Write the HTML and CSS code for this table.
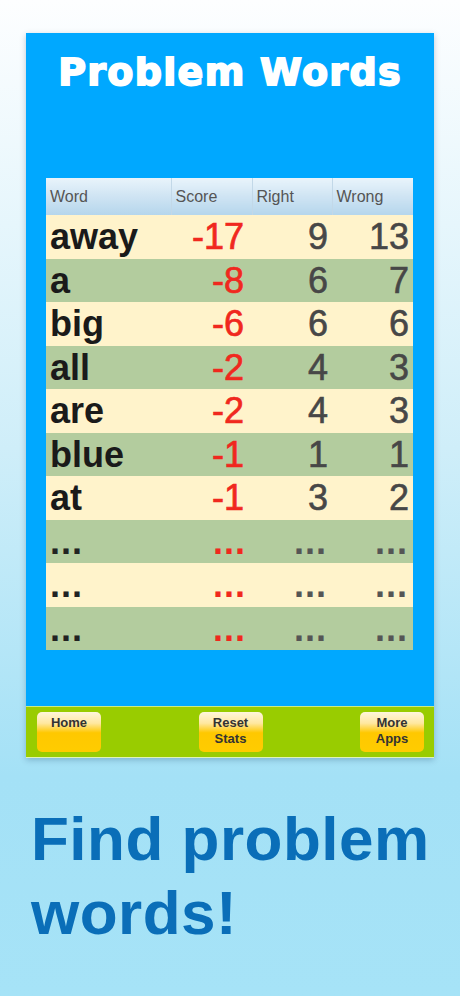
FILE: index.html
```html
<!DOCTYPE html>
<html lang="en">
<head>
<meta charset="UTF-8">
<meta name="viewport" content="width=device-width, initial-scale=1.0">
<title>Problem Words</title>
<link rel="stylesheet" href="styles.css">
</head>
<body>

<div id="phone">
  <div id="screen">
    <h1 class="title">Problem Words</h1>
    <table id="wordTable">
      <thead>
        <tr>
          <th class="col-word">Word</th>
          <th class="col-score">Score</th>
          <th class="col-right">Right</th>
          <th class="col-wrong">Wrong</th>
        </tr>
      </thead>
      <tbody>
        <tr><td class="word">away</td><td class="score">-17</td><td class="num">9</td><td class="num">13</td></tr>
        <tr><td class="word">a</td><td class="score">-8</td><td class="num">6</td><td class="num">7</td></tr>
        <tr><td class="word">big</td><td class="score">-6</td><td class="num">6</td><td class="num">6</td></tr>
        <tr><td class="word">all</td><td class="score">-2</td><td class="num">4</td><td class="num">3</td></tr>
        <tr><td class="word">are</td><td class="score">-2</td><td class="num">4</td><td class="num">3</td></tr>
        <tr><td class="word">blue</td><td class="score">-1</td><td class="num">1</td><td class="num">1</td></tr>
        <tr><td class="word">at</td><td class="score">-1</td><td class="num">3</td><td class="num">2</td></tr>
        <tr class="more"><td class="word">...</td><td class="score">...</td><td class="num">...</td><td class="num">...</td></tr>
        <tr class="more"><td class="word">...</td><td class="score">...</td><td class="num">...</td><td class="num">...</td></tr>
        <tr class="more"><td class="word">...</td><td class="score">...</td><td class="num">...</td><td class="num">...</td></tr>
      </tbody>
    </table>
  </div>
  <div id="toolbar">
    <button class="tool-btn">Home</button>
    <button class="tool-btn">Reset<br>Stats</button>
    <button class="tool-btn">More<br>Apps</button>
  </div>
</div>

<h2 class="caption">Find problem words!</h2>

</body>
</html>
```

FILE: styles.css
```css
body {
  margin: 0;
  padding: 33px 0 0 0;
  height: 996px;
  box-sizing: border-box;
  font-family: "Liberation Sans", Arial, sans-serif;
  background: linear-gradient(to bottom, #fdfeff 0%, #cfeef9 45%, #a4e1f6 78%, #a6e3f7 100%);
  overflow: hidden;
}

#phone {
  margin: 0 26px;
  box-shadow: 0 2px 6px rgba(0, 40, 80, 0.25);
}

#screen {
  background-color: #00a8ff;
  height: 673px;
  padding-top: 1px;
  box-sizing: border-box;
}

.title {
  margin: 15px 0 0 0;
  text-align: center;
  color: white;
  font-family: "DejaVu Sans", sans-serif;
  font-weight: bold;
  font-size: 38px;
  letter-spacing: 1.3px;
  line-height: 46px;
  -webkit-text-stroke: 1.8px white;
}

#wordTable {
  margin: 83px 0 0 20px;
  width: 367px;
  border-collapse: collapse;
  table-layout: fixed;
}

#wordTable th,
#wordTable td {
  box-sizing: border-box;
}

#wordTable th {
  height: 37px;
  padding: 0 0 0 4px;
  text-align: left;
  font-weight: normal;
  font-size: 16px;
  color: #555;
  background: linear-gradient(to bottom, #e9f4fb 0%, #cfe4f3 50%, #b5d6ec 100%);
  border-left: 1px solid #c2d8e8;
}

#wordTable th:first-child {
  border-left: none;
}

.col-word { width: 125px; }
.col-score { width: 81px; }
.col-right { width: 80px; }
.col-wrong { width: 81px; }

#wordTable td {
  height: 43.5px;
  padding: 0 4px;
  font-size: 36px;
  line-height: 43px;
  vertical-align: middle;
  white-space: nowrap;
}

#wordTable tbody tr:nth-child(odd) {
  background-color: #fff3cb;
}

#wordTable tbody tr:nth-child(even) {
  background-color: #b3cc9e;
}

#wordTable td.word {
  text-align: left;
  color: #1a1a1a;
  font-weight: bold;
}

#wordTable td.score {
  text-align: right;
  color: #f0281e;
  padding-right: 8px;
  -webkit-text-stroke: 0.7px #f0281e;
}

#wordTable td.num {
  text-align: right;
  color: #474747;
  -webkit-text-stroke: 0.6px #474747;
}

#wordTable .more td {
  font-weight: bold;
  letter-spacing: 1px;
  -webkit-text-stroke: 0;
}

#wordTable .more td.word {
  color: #222;
}

#wordTable .more td.score {
  padding-right: 6px;
}

#wordTable .more td.num {
  color: #555;
  padding-right: 5px;
}

#toolbar {
  height: 52px;
  background-color: #99cc00;
  border-top: 1px solid #c9ea86;
  border-bottom: 1px solid #dff2b8;
  box-sizing: border-box;
  display: flex;
  justify-content: space-between;
  align-items: flex-start;
  padding: 5px 10px 0 11px;
}

.tool-btn {
  width: 64px;
  height: 40px;
  border: none;
  border-radius: 5px;
  padding: 3px 0 0 0;
  background: linear-gradient(to bottom, #fff6dc 0%, #ffe8a0 28%, #ffc800 52%, #ffcc00 100%);
  font-family: "Liberation Sans", Arial, sans-serif;
  font-weight: bold;
  font-size: 13px;
  line-height: 16px;
  color: #333;
  display: flex;
  flex-direction: column;
  align-items: center;
  justify-content: flex-start;
}

.caption {
  margin: 44px 0 0 31px;
  font-size: 62px;
  line-height: 74px;
  letter-spacing: 0.5px;
  font-weight: bold;
  color: #0a6eb8;
}
```
